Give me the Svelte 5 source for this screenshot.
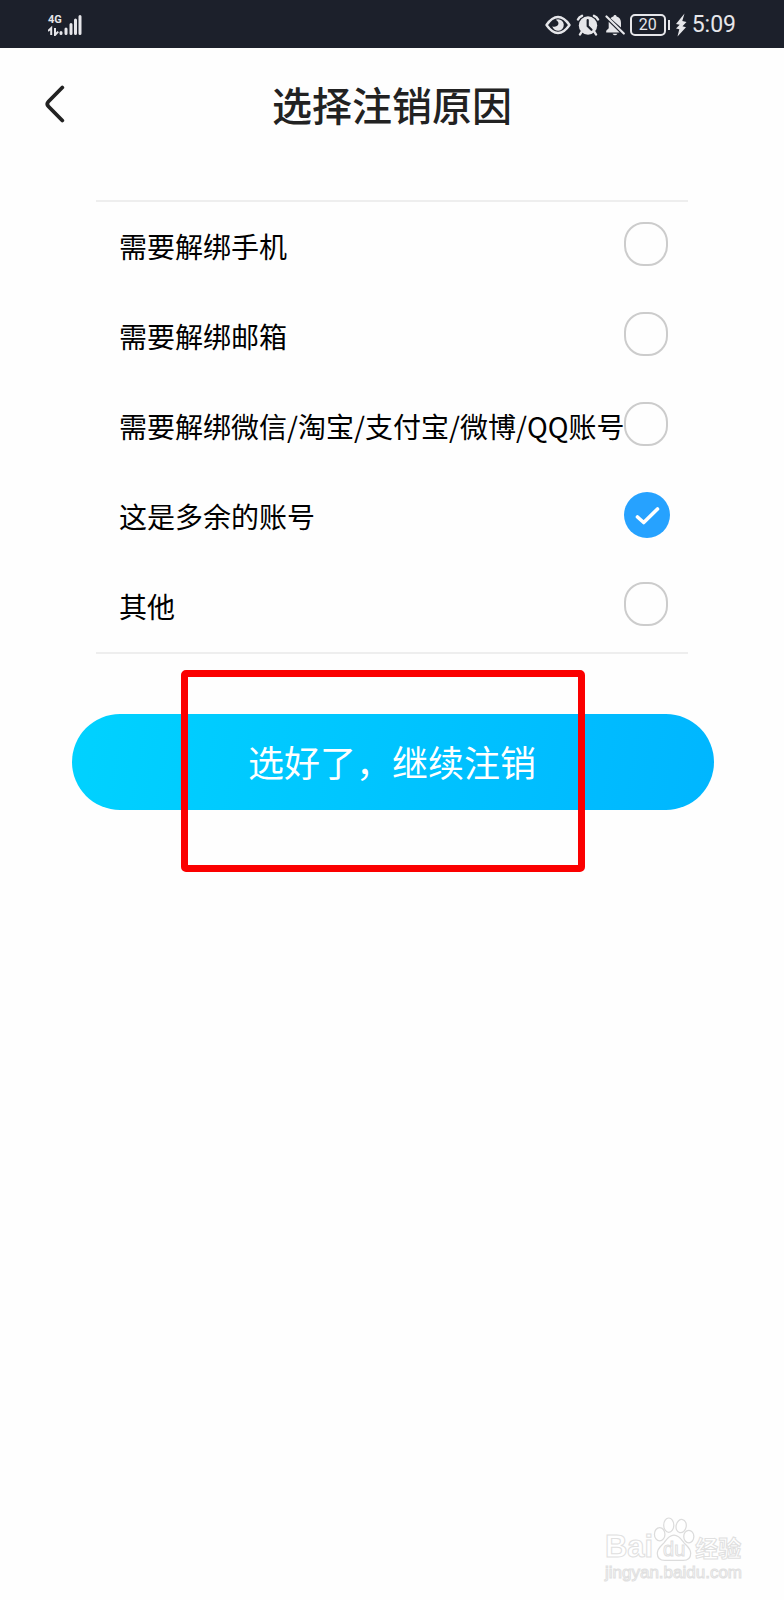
<script lang="ts">
  type Reason = {
    id: string;
    label: string;
  };

  const reasons: Reason[] = [
    { id: 'phone', label: '需要解绑手机' },
    { id: 'email', label: '需要解绑邮箱' },
    { id: 'social', label: '需要解绑微信/淘宝/支付宝/微博/QQ账号' },
    { id: 'extra', label: '这是多余的账号' },
    { id: 'other', label: '其他' }
  ];

  let selected = $state('extra');
</script>

<div class="screen">
  <div class="status-bar">
    <div class="network">
      <span class="network-type">4G</span>
      <svg class="signal" width="34" height="22" viewBox="0 0 34 22" aria-hidden="true">
        <path d="M0 17l3.200-3v7M7 14v7l3.200-3.400" fill="none" stroke="currentColor" stroke-width="2" />
        <path
          d="M13 18.500v1M18 15v4.500M23 10.500v9M27.500 6v13.500M32 2.500v17"
          fill="none"
          stroke="currentColor"
          stroke-width="3"
          stroke-linecap="round"
        />
      </svg>
    </div>

    <div class="indicators">
      <svg width="26" height="20" viewBox="0 0 26 20" aria-hidden="true">
        <path d="M1.500 10Q7 2 13 2t11.500 8Q19 18 13 18T1.500 10z" fill="none" stroke="currentColor" stroke-width="2.400" stroke-linejoin="round" />
        <path d="M13 4.200a5.800 5.800 0 1 1-5.700 7c2 1.200 5.400.3 6.100-2.200.4-1.800-.7-3.200-2.600-4.300a6 6 0 0 1 2.200-.5z" fill="currentColor" />
      </svg>
      <svg width="24" height="22" viewBox="0 0 24 22" aria-hidden="true">
        <circle cx="12" cy="11.500" r="9.200" fill="currentColor" />
        <path d="M2 5.500Q3 3 6 1.800M22 5.500Q21 3 18 1.800M5.500 18L4 20.500M18.500 18l1.500 2.500" fill="none" stroke="currentColor" stroke-width="2.400" stroke-linecap="round" />
        <path d="M11.700 6v6l3.800 3.800" fill="none" stroke="#1c202b" stroke-width="2.200" stroke-linecap="round" />
      </svg>
      <svg width="20" height="22" viewBox="0 0 20 22" aria-hidden="true">
        <path d="M5.500 4.200Q7 2.800 8.400 2.500C8.600.5 11.400.5 11.600 2.500 15 3.500 16 6 16 9v4.500zM3.700 7.800L14.600 18.500H1.200v-1.800l2.500-2.500zM7.500 19.800h5q-2.500 3-5 0z" fill="currentColor" />
        <path d="M1.500 2.500l17.300 17" stroke="currentColor" stroke-width="2.200" stroke-linecap="round" />
      </svg>
      <span class="battery"><span class="level">20</span></span>
      <svg width="12" height="24" viewBox="0 0 12 24" aria-hidden="true">
        <path d="M9.500.5L1 11l3.700.8L1 15.500l3.300.7L2.500 23.500l8.500-9.300-3.500-1L11.500 9 7.300 8z" fill="currentColor" />
      </svg>
      <time class="clock">5:09</time>
    </div>
  </div>

  <header class="header">
    <button type="button" class="back" aria-label="返回">
      <svg width="20" height="38" viewBox="0 0 20 38" aria-hidden="true">
        <path d="M17.300 2.500L3.500 16.500q-2.400 2.500 0 5L17.300 35.500" fill="none" stroke="currentColor" stroke-width="3.800" stroke-linecap="round" />
      </svg>
    </button>
    <h1>选择注销原因</h1>
  </header>

  <main>
    <div class="reasons" role="radiogroup" aria-label="选择注销原因">
      {#each reasons as reason (reason.id)}
        <label class="reason">
          <span class="label">{reason.label}</span>
          <input type="radio" name="reason" value={reason.id} bind:group={selected} />
          <span class="mark">
            {#if selected === reason.id}
              <svg width="46" height="46" viewBox="0 0 46 46" aria-hidden="true">
                <path d="M13.500 25l6.200 5.500L33.500 17" fill="none" stroke="#fff" stroke-width="3.600" stroke-linecap="round" stroke-linejoin="round" />
              </svg>
            {/if}
          </span>
        </label>
      {/each}
    </div>

    <div class="action">
      <button type="button" class="submit">选好了，继续注销</button>
      <div class="highlight"></div>
    </div>
  </main>

  <footer class="watermark">
    <div class="brand">
      <span class="latin">Bai</span>
      <span class="paw">
        <svg width="42" height="46" viewBox="0 0 44 48" aria-hidden="true">
          <g fill="#fff" stroke="#dcdcdc" stroke-width="1.300">
            <ellipse cx="7" cy="19" rx="5.500" ry="7" />
            <ellipse cx="16.500" cy="9.500" rx="5.300" ry="7.500" />
            <ellipse cx="29.500" cy="10.500" rx="5.300" ry="7" transform="rotate(12 29.500 10.500)" />
            <ellipse cx="37.500" cy="21.500" rx="5.300" ry="6.500" />
            <path d="M22 20c-5 0-7.500 4-10 7.500C9 31 4.500 33.500 4.500 39c0 5 3.500 7.500 8 7.500h19c4.500 0 8-2.500 8-7.500 0-5.500-4.500-8-7.500-11.500C29.500 24 27 20 22 20z" />
          </g>
        </svg>
        <span class="du">du</span>
      </span>
      <span class="chinese">经验</span>
    </div>
    <span class="site">jingyan.baidu.com</span>
  </footer>
</div>

<style>
  :global(body) {
    margin: 0;
    background: #fefefe;
  }

  .screen {
    display: flex;
    flex-direction: column;
    min-height: 100vh;
    color: #000;
    font-family: 'Noto Sans CJK SC', sans-serif;
  }

  .status-bar {
    display: flex;
    align-items: center;
    justify-content: space-between;
    box-sizing: border-box;
    height: 48px;
    padding: 2px 48px 0;
    background: #1c202b;
    color: #e6e6ea;
    font-family: Roboto, sans-serif;
  }

  .network {
    position: relative;
    display: flex;
  }

  .network-type {
    position: absolute;
    top: 0;
    left: 0;
    font-size: 11px;
    font-weight: 700;
    line-height: 11px;
  }

  .indicators {
    display: flex;
    align-items: center;
    gap: 5px;
  }

  .battery {
    display: flex;
    align-items: center;
    gap: 2px;
  }

  .level {
    box-sizing: border-box;
    width: 36px;
    border: 2px solid currentColor;
    border-radius: 5px;
    font-size: 16px;
    line-height: 18px;
    text-align: center;
  }

  .battery::after {
    content: '';
    width: 2px;
    height: 10px;
    background: currentColor;
  }

  .clock {
    font-size: 23px;
    line-height: 24px;
  }

  .header {
    display: grid;
    grid-template-columns: 65px 1fr 65px;
    align-items: center;
    height: 112px;
    color: #222;
  }

  .back {
    display: flex;
    justify-content: flex-end;
    padding: 0;
    border: 0;
    background: transparent;
    color: inherit;
    cursor: pointer;
  }

  h1 {
    margin: 0;
    font-size: 40px;
    font-weight: 500;
    line-height: 60px;
    text-align: center;
  }

  .reasons {
    margin: 40px 96px 0;
    border-top: 2px solid #eee;
    border-bottom: 2px solid #eee;
  }

  .reason {
    position: relative;
    display: flex;
    align-items: flex-start;
    height: 90px;
    padding-left: 23px;
    cursor: pointer;
  }

  .label {
    flex: 1;
    font-size: 28px;
    line-height: 88px;
    white-space: nowrap;
  }

  .reason input {
    position: absolute;
    opacity: 0;
  }

  .mark {
    flex: none;
    box-sizing: border-box;
    width: 44px;
    height: 44px;
    margin: 20px 20px 0 0;
    border: 2px solid #ccc;
    border-radius: 20px;
  }

  .reason input:checked + .mark {
    width: 46px;
    height: 46px;
    margin-right: 18px;
    border: 0;
    border-radius: 50%;
    background: #26a2ff;
  }

  .action {
    position: relative;
    margin: 60px 70px 0 72px;
  }

  .submit {
    display: block;
    width: 100%;
    height: 96px;
    padding: 0 2px 2px 0;
    border: 0;
    border-radius: 48px;
    background: linear-gradient(100deg, #00d2ff, #00b6ff);
    color: #fff;
    font-family: inherit;
    font-size: 36px;
    line-height: 92px;
    cursor: pointer;
  }

  .highlight {
    position: absolute;
    top: -44px;
    bottom: -62px;
    left: 109px;
    right: 129px;
    border: 7px solid #fb0000;
    border-radius: 5px;
    pointer-events: none;
  }

  .watermark {
    align-self: flex-end;
    display: flex;
    flex-direction: column;
    margin-top: auto;
    padding: 0 42px 16px 0;
    color: #fff;
    font-family: 'Liberation Sans', sans-serif;
    -webkit-text-stroke: 1px #e0e0e0;
  }

  .brand {
    display: flex;
    align-items: flex-end;
    height: 48px;
  }

  .latin {
    font-size: 31px;
    font-weight: 700;
    line-height: 30px;
  }

  .paw {
    position: relative;
    display: flex;
  }

  .du {
    position: absolute;
    right: 0;
    bottom: 3px;
    left: 0;
    font-size: 20px;
    line-height: 20px;
    text-align: center;
  }

  .chinese {
    font-family: 'Noto Sans CJK SC', sans-serif;
    font-size: 23px;
    font-weight: 700;
    line-height: 30px;
  }

  .site {
    font-size: 17px;
    line-height: 22px;
  }
</style>
